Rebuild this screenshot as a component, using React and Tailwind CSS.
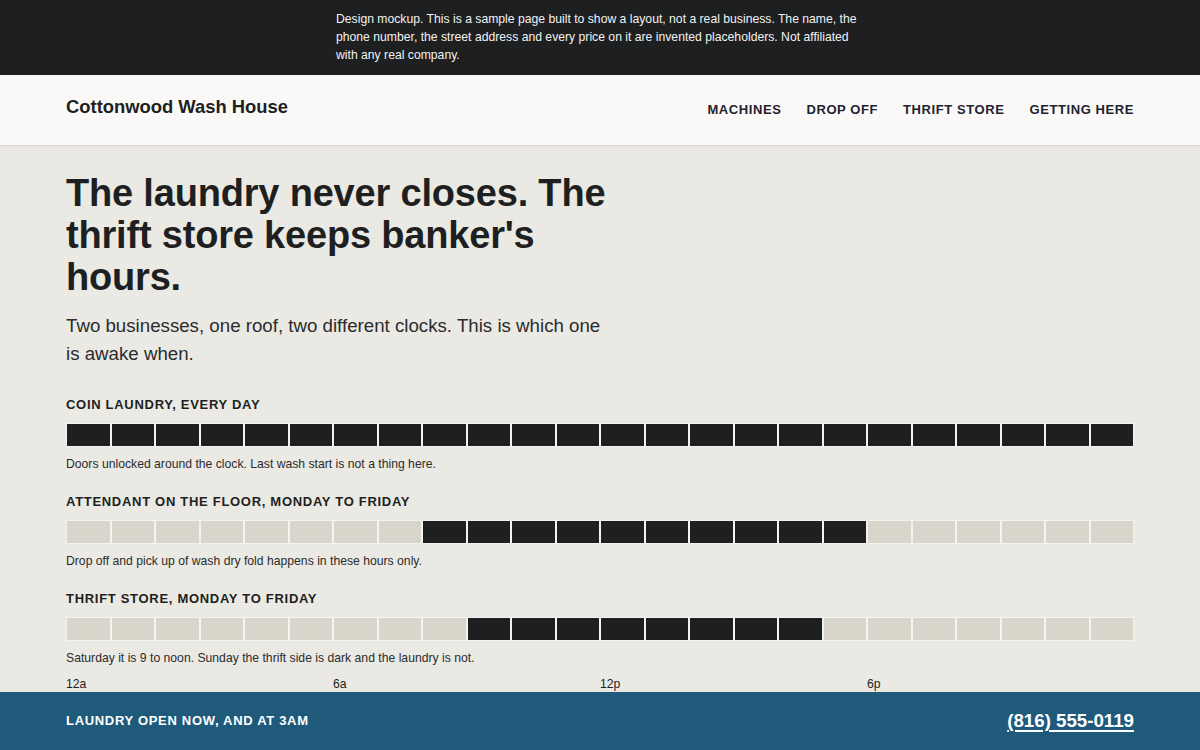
import React from "react";

const font = { fontFamily: '"Liberation Sans", Arial, sans-serif' };

const schedules = [
  {
    label: "Coin laundry, every day",
    open: [0, 24],
    note: "Doors unlocked around the clock. Last wash start is not a thing here.",
  },
  {
    label: "Attendant on the floor, Monday to Friday",
    open: [8, 18],
    note: "Drop off and pick up of wash dry fold happens in these hours only.",
  },
  {
    label: "Thrift store, Monday to Friday",
    open: [9, 17],
    note: "Saturday it is 9 to noon. Sunday the thrift side is dark and the laundry is not.",
  },
];

const hours = Array.from({ length: 24 }, (_, i) => i);

function HourBar({ open }) {
  return (
    <div className="flex h-6">
      {hours.map((h) => {
        const on = h >= open[0] && h < open[1];
        return (
          <div
            key={h}
            className={`flex-1 border border-[#f4f3ef] ${on ? "bg-[#1d1f21]" : "bg-[#d8d6cb]"}`}
          />
        );
      })}
    </div>
  );
}

export default function App() {
  return (
    <div className="min-h-screen bg-[#ebe9e3] text-[#1d1f21] pb-[58px]" style={font}>
      <div className="bg-[#1d1f21] text-[#f2f2f2]">
        <p className="mx-auto w-[528px] pt-[10px] pb-[11px] text-[12.2px] leading-[18px]">
          Design mockup. This is a sample page built to show a layout, not a real business. The name, the phone number, the street address and every price on it are invented placeholders. Not affiliated with any real company.
        </p>
      </div>

      <header className="bg-[#faf9f7] border-b border-[#dcdad3] h-[71px]">
        <div className="mx-auto max-w-[1068px] h-full flex items-center justify-between">
          <div className="text-[18.4px] font-bold leading-none -mt-[6px]">Cottonwood Wash House</div>
          <nav className="flex gap-[25px] text-[13px] font-semibold tracking-[0.045em] uppercase text-[#1f2230] -mt-[1px]">
            <a>Machines</a>
            <a>Drop off</a>
            <a>Thrift store</a>
            <a>Getting here</a>
          </nav>
        </div>
      </header>

      <main className="mx-auto max-w-[1068px] pt-[26px]">
        <div className="max-w-[560px]">
          <h1 className="text-[38px] font-bold leading-[42px] tracking-[-0.005em]">
            The laundry never closes. The thrift store keeps banker's hours.
          </h1>
          <p className="mt-[14px] max-w-[546px] text-[18.7px] leading-[28px] text-[#2a2c2e]">
            Two businesses, one roof, two different clocks. This is which one is awake when.
          </p>
        </div>

        <div className="mt-[28px] flex flex-col gap-[20px]">
          {schedules.map((s) => (
            <section key={s.label}>
              <h2 className="text-[13px] font-bold uppercase tracking-[0.054em] leading-[18px] mb-[9px]">
                {s.label}
              </h2>
              <HourBar open={s.open} />
              <p className="mt-[8px] text-[12.2px] leading-[18px] text-[#2a2c2e]">{s.note}</p>
            </section>
          ))}
        </div>

        <div className="mt-[8px] grid grid-cols-4 text-[12.2px] leading-[18px]">
          <span>12a</span>
          <span>6a</span>
          <span>12p</span>
          <span>6p</span>
        </div>
      </main>

      <div className="fixed bottom-0 left-0 right-0 h-[58px] bg-[#1f5a7b] text-white">
        <div className="mx-auto max-w-[1068px] h-full flex items-center justify-between">
          <span className="text-[13px] font-bold uppercase tracking-[0.053em]">
            Laundry open now, and at 3am
          </span>
          <a className="text-[18.7px] font-bold underline underline-offset-[3px] decoration-2">
            (816) 555-0119
          </a>
        </div>
      </div>
    </div>
  );
}
